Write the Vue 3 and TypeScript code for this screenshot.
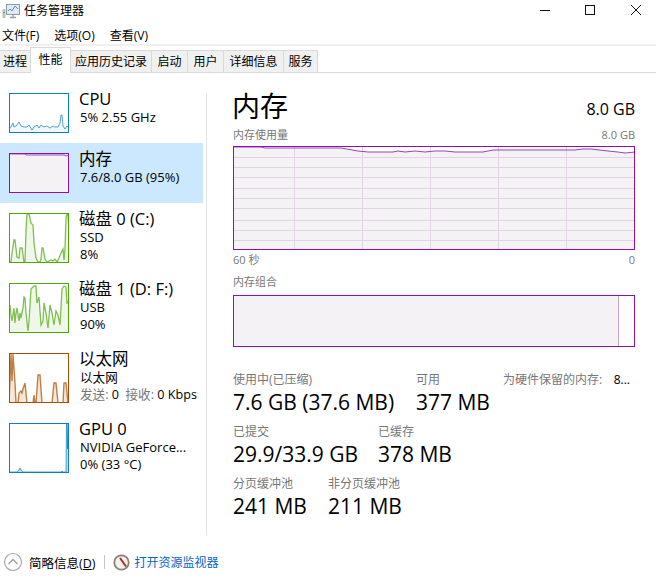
<script setup lang="ts">
interface Item {
  name: string; sub: string; third?: string; thirdGray?: boolean; h: number; color: string; fill: string; sw: number; pts: number[][]; selected?: boolean; cjkSub?: boolean;
}
const toPoints = (p: number[][]) => p.map((q) => q.join(',')).join(' ');
const area = (p: number[][], w: number, h: number) =>
  `0,${h} ${toPoints(p)} ${w},${h}`;

const items: Item[] = [
  { name: 'CPU', sub: '5%  2.55 GHz', h: 40, color: '#117dbb', fill: '#f1f6fa', sw: 1,
    pts: [[0,35],[2,34],[4,30],[5,34],[7,33],[10,29],[12,33],[15,34],[18,34],[20,32],[23,37],[25,34],[28,32],[30,35],[32,32],[35,34],[38,33],[41,35],[44,33],[46,34],[49,34],[51,30],[52,22],[53,22],[54,33],[56,36],[58,33],[60,35]] },
  { name: '内存', sub: '7.6/8.0 GB (95%)', h: 40, color: '#8b12ae', fill: '#f4f2f4', sw: 1, selected: true,
    pts: [[0,1],[16,1],[17,2],[52,2],[55,2],[57,3],[60,2]] },
  { name: '磁盘 0 (C:)', sub: 'SSD', third: '8%', h: 50, color: '#4da60c', fill: '#eff7e9', sw: 1.3,
    pts: [[0,49],[2,49],[3,40],[5,27],[6,27],[8,44],[10,45],[11,35],[13,35],[15,49],[16,49],[17,18],[18,1],[20,1],[22,10],[24,12],[25,30],[27,45],[29,49],[31,49],[32,46],[33,35],[34,35],[36,46],[38,49],[42,47],[44,48],[46,46],[48,49],[50,45],[52,40],[54,36],[55,47],[56,36],[57,5],[58,1],[59,1],[60,20]] },
  { name: '磁盘 1 (D: F:)', sub: 'USB', third: '90%', h: 50, color: '#4da60c', fill: '#eff7e9', sw: 1.3,
    pts: [[0,25],[1,22],[2,32],[3,38],[5,25],[6,40],[7,30],[8,25],[10,38],[11,30],[12,35],[14,25],[15,14],[16,15],[17,30],[19,48],[20,38],[22,6],[25,3],[27,3],[28,20],[30,14],[32,42],[34,38],[35,20],[37,30],[39,45],[41,22],[43,30],[45,42],[47,28],[49,32],[51,42],[53,6],[55,3],[57,4],[58,20],[60,18]] },
  { name: '以太网', sub: '以太网', cjkSub: true, third: '发送: 0  接收: 0 Kbps', thirdGray: true, h: 50, color: '#a74f01', fill: '#f8e6d8', sw: 1.4,
    pts: [[0,50],[2,1],[3,28],[4,1],[6,30],[7,50],[9,50],[10,40],[12,38],[13,40],[14,36],[16,30],[18,50],[24,50],[25,42],[26,50],[27,50],[29,22],[31,22],[33,50],[43,50],[45,30],[47,30],[49,50],[54,50],[55,30],[57,30],[59,50]] },
  { name: 'GPU 0', sub: 'NVIDIA GeForce...', third: '0% (33 °C)', h: 50, color: '#117dbb', fill: '#bcdcef', sw: 1,
    pts: [[0,49],[8,49],[10,47],[11,45],[12,47],[14,49],[52,49],[53,48],[54,49],[56,49],[57,49],[57.5,1],[58,1],[58.5,26],[59,1],[60,1]] },
];

const gridX = [61, 129, 197, 265, 333];
const gridY = [11, 21, 31, 42, 52, 62, 74, 84, 94];
const memLine: number[][] = [[0,1],[28,1],[32,2],[108,2],[125,5],[135,6],[160,6],[165,5],[172,6],[182,5],[192,6],[202,5],[212,5],[222,6],[250,6],[260,4],[342,4],[350,3],[358,3],[375,5],[385,6],[392,7],[402,6]];
const tabs = [
  { label: '进程', width: 31 },
  { label: '性能', width: 41 },
  { label: '应用历史记录', width: 81 },
  { label: '启动', width: 36 },
  { label: '用户', width: 36 },
  { label: '详细信息', width: 60 },
  { label: '服务', width: 34 },
];
</script>

<template>
  <div class="win">
    <div class="title">
      <svg class="app-icon" width="18" height="16" viewBox="0 0 18 16">
        <rect x="0.5" y="6" width="3" height="9" fill="#b9c4b5" />
        <rect x="1" y="9" width="2" height="1" fill="#5fb04a" />
        <rect x="4.5" y="1.5" width="13" height="10" fill="#dfeaf4" stroke="#8d9aa8" />
        <path d="M6 8 L8 6 L10 8 L13 3 L16 6" fill="none" stroke="#5d8fc0" />
        <path d="M8 14.5 H14 M11 12 V14" stroke="#98a2ad" stroke-width="1.4" />
      </svg>
      <span class="title-text">任务管理器</span>
      <div class="controls">
        <svg width="12" height="12" viewBox="0 0 12 12"><path d="M1 6.5 H11" stroke="#111" /></svg>
        <svg width="12" height="12" viewBox="0 0 12 12"><rect x="1.5" y="1.5" width="9" height="9" fill="none" stroke="#111" /></svg>
        <svg class="close" width="12" height="12" viewBox="0 0 12 12"><path d="M1 1 L11 11 M11 1 L1 11" stroke="#111" /></svg>
      </div>
    </div>
    <div class="menu">
      <span>文件(F)</span><span>选项(O)</span><span>查看(V)</span>
    </div>
    <div class="tabs">
      <div v-for="(t, i) in tabs" :key="t.label" class="tab" :class="{ active: i === 1 }" :style="{ width: t.width + 'px' }">{{ t.label }}</div>
    </div>
    <div class="main">
      <div class="side">
        <div v-for="it in items" :key="it.name" class="item" :class="{ sel: it.selected }" :style="{ height: it.h + 20 + 'px' }">
          <svg class="thumb" :width="60" :height="it.h" :viewBox="`0 0 60 ${it.h}`">
            <polygon :points="area(it.pts, 60, it.h)" :fill="it.fill" />
            <polyline :points="toPoints(it.pts)" fill="none" :stroke="it.color" :stroke-width="it.sw" opacity="0.7" />
            <rect x="0.5" y="0.5" width="59" :height="it.h - 1" fill="none" :stroke="it.color" />
          </svg>
          <div class="info">
            <div class="name">{{ it.name }}</div>
            <div class="sub" :class="{ cjk: it.cjkSub }">{{ it.sub }}</div>
            <div v-if="it.third" class="sub" :class="{ gray: it.thirdGray }">
              <template v-if="it.thirdGray">发送: <b>0</b>&nbsp; 接收: <b>0 Kbps</b></template>
              <template v-else>{{ it.third }}</template>
            </div>
          </div>
        </div>
      </div>
      <div class="divider"></div>
      <div class="panel">
        <div class="head">
          <span class="h1">内存</span>
          <span class="h2">8.0 GB</span>
        </div>
        <div class="row label"><span>内存使用量</span><span>8.0 GB</span></div>
        <svg class="graph" width="402" height="104" viewBox="0 0 402 104">
          <polygon :points="area(memLine, 402, 104)" fill="#f4f2f4" />
          <g stroke="#e2d3e6" shape-rendering="crispEdges">
            <line v-for="x in gridX" :key="x" :x1="x + 0.5" :x2="x + 0.5" y1="1" y2="103" />
            <line v-for="y in gridY" :key="y" x1="1" x2="401" :y1="y + 0.5" :y2="y + 0.5" />
          </g>
          <polyline :points="toPoints(memLine)" fill="none" stroke="#a03fbf" />
          <rect x="0.5" y="0.5" width="401" height="103" fill="none" stroke="#8b12ae" />
        </svg>
        <div class="row label axis"><span>60 秒</span><span>0</span></div>
        <div class="row label combo"><span>内存组合</span></div>
        <div class="combo-bar">
          <div class="combo-fill"></div>
        </div>
        <div class="stats first">
          <div class="stat w183"><div class="lab">使用中(已压缩)</div><div class="val">7.6 GB (37.6 MB)</div></div>
          <div class="stat w87"><div class="lab">可用</div><div class="val">377 MB</div></div>
          <div class="stat reserved"><span class="lab">为硬件保留的内存:</span><span class="res-val">8...</span></div>
        </div>
        <div class="stats">
          <div class="stat w145"><div class="lab">已提交</div><div class="val">29.9/33.9 GB</div></div>
          <div class="stat"><div class="lab">已缓存</div><div class="val">378 MB</div></div>
        </div>
        <div class="stats">
          <div class="stat w95"><div class="lab">分页缓冲池</div><div class="val">241 MB</div></div>
          <div class="stat"><div class="lab">非分页缓冲池</div><div class="val">211 MB</div></div>
        </div>
      </div>
    </div>
    <div class="foot">
      <svg width="20" height="20" viewBox="0 0 20 20">
        <circle cx="10" cy="10" r="8.5" fill="#fff" stroke="#a8a8a8" stroke-width="1.2" />
        <path d="M5.5 12 L10 7.5 L14.5 12" fill="none" stroke="#a0a0a0" stroke-width="1.4" />
      </svg>
      <span class="less">简略信息(<u>D</u>)</span>
      <span class="sep"></span>
      <svg width="17" height="17" viewBox="0 0 17 17">
        <circle cx="8.5" cy="8.5" r="7.2" fill="#f6f3ee" stroke="#8a8178" stroke-width="1.8" />
        <path d="M7 4 L13 12.5" stroke="#b3262c" stroke-width="2" />
      </svg>
      <span class="link">打开资源监视器</span>
    </div>
  </div>
</template>

<style scoped>
.win {
  width: 656px;
  height: 585px;
  overflow: hidden;
  background: #fff;
  color: #000;
  font-family: "Open Sans", "Noto Sans CJK SC", sans-serif;
  font-size: 12px;
  display: flex;
  flex-direction: column;
}
.title {
  height: 22px;
  display: flex;
  align-items: center;
  padding-left: 2px;
}
.app-icon { margin-right: 4px; }
.title-text { line-height: 20px; }
.controls {
  margin-left: auto;
  display: flex;
  gap: 33px;
  padding-right: 14px;
  align-self: flex-start;
  padding-top: 4px;
}
.close { margin-left: 1px; }
.menu {
  height: 22px;
  display: flex;
  gap: 15px;
  padding-left: 2px;
  align-items: center;
  padding-top: 3px;
  box-sizing: border-box;
}
.tabs {
  height: 29px;
  box-sizing: border-box;
  border-top: 2px solid #f0f0f0;
  border-bottom: 1px solid #d9d9d9;
  display: flex;
  align-items: flex-end;
}
.tab {
  height: 22px;
  line-height: 21px;
  text-align: center;
  background: #f0f0f0;
  border: 1px solid #d9d9d9;
  border-bottom: 0;
  border-left: 0;
  box-sizing: border-box;
  white-space: nowrap;
}
.tab.active {
  height: 26px;
  line-height: 24px;
  margin-bottom: -1px;
  background: #fff;
  border-left: 1px solid #d9d9d9;
  margin-left: -1px;
}
.main {
  flex: 1;
  display: flex;
  min-height: 0;
}
.side {
  width: 203px;
  padding-top: 10px;
}
.item {
  display: flex;
  box-sizing: border-box;
  padding: 10px 0 0 9px;
}
.item.sel { background: #cce8ff; }
.thumb { flex: none; display: block; }
.info {
  margin-left: 10px;
  margin-top: -4px;
  white-space: nowrap;
}
.name { font-size: 16.5px; line-height: 20px; }
.sub { font-size: 13px; line-height: 17px; padding-left: 1px; }
.sub.cjk, .sub.gray { font-size: 12.6px; }
.sub.gray { color: #777; }
.sub.gray b { font-weight: 400; color: #000; }
.divider {
  width: 1px;
  margin: 20px 0 0 3px;
  background: #e4e4e4;
}
.panel {
  width: 402px;
  margin-left: 26px;
  padding-top: 15px;
}
.head {
  height: 39px;
  display: flex;
  justify-content: space-between;
  white-space: nowrap;
}
.h1 { font-size: 28px; line-height: 36px; margin-left: -1px; }
.h2 { font-size: 16px; line-height: 42px; }
.row { display: flex; justify-content: space-between; }
.label { color: #777; font-size: 11px; height: 16px; line-height: 16px; }
.graph { display: block; margin-top: 3px; }
.axis { margin-top: 2px; }
.combo { margin-top: 6px; }
.combo-bar {
  margin-top: 5px;
  height: 52px;
  box-sizing: border-box;
  border: 1px solid #8b12ae;
}
.combo-fill {
  width: 384px;
  height: 100%;
  background: #f4f2f4;
  border-right: 1px solid #cda3dc;
}
.stats {
  display: flex;
  height: 52px;
  white-space: nowrap;
}
.stats.first { margin-top: 25px; }
.w183 { width: 183px; }
.w87 { width: 87px; }
.w145 { width: 145px; }
.w95 { width: 95px; }
.lab { color: #777; font-size: 12px; line-height: 16px; }
.val { font-size: 21px; line-height: 28px; }
.reserved { display: flex; width: 127px; justify-content: space-between; }
.res-val { font-size: 12px; line-height: 16px; }
.foot {
  height: 50px;
  display: flex;
  align-items: center;
  padding-left: 3px;
  padding-top: 4px;
  box-sizing: border-box;
}
.less { margin-left: 6px; font-size: 12.5px; }
.sep { width: 1px; height: 14px; background: #c8c8c8; margin: 0 8px 0 9px; }
.link { color: #0066cc; margin-left: 4px; }
</style>
